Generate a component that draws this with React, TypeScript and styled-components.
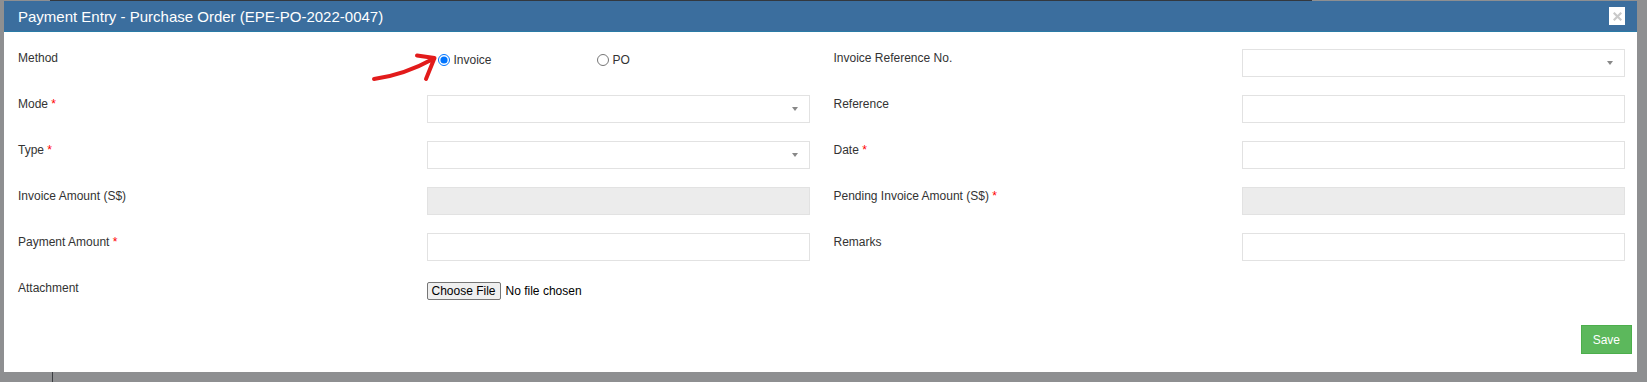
import React from "react";
import styled, { createGlobalStyle } from "styled-components";

const GlobalStyle = createGlobalStyle`
  html, body {
    margin: 0;
    padding: 0;
    background: #8e8f91;
    font-family: "Liberation Sans", Arial, sans-serif;
  }
`;

const Page = styled.div`
  width: 1647px;
  height: 382px;
  overflow: hidden;
`;

const TopStrip = styled.div`
  height: 1px;
  display: flex;
`;

const TopBar = styled.div`
  margin-left: 50px;
  width: 1262px;
  background: #33383e;
`;

const BottomStrip = styled.div`
  height: 10px;
  display: flex;
`;

const BottomLine = styled.div`
  margin-left: 52px;
  width: 1px;
  background: #3a3d41;
`;

const Modal = styled.div`
  margin-left: 4px;
  width: 1633px;
  background: #fff;
`;

const Header = styled.div`
  height: 30px;
  display: flex;
  align-items: center;
  justify-content: space-between;
  padding: 0 12px 0 14px;
  background: #3b6e9e;
  border-bottom: 1px solid #2b7ba6;
`;

const Title = styled.h4`
  margin: 0;
  font-size: 15px;
  font-weight: 400;
  line-height: 17px;
  color: #fff;
`;

const CloseButton = styled.button`
  width: 16px;
  height: 18px;
  padding: 0;
  border: none;
  background: #fff;
  display: flex;
  align-items: center;
  justify-content: center;
`;

const Body = styled.div`
  position: relative;
  padding: 17px 12px 0 14px;
`;

const Annotation = styled.svg`
  position: absolute;
  left: 361px;
  top: 18px;
  overflow: visible;
`;

const Row = styled.div`
  display: grid;
  grid-template-columns: 1fr 1fr;
  column-gap: 24px;
  min-height: 28px;
  margin-bottom: 18px;
`;

const Field = styled.div`
  display: grid;
  grid-template-columns: 1fr 383px;
  align-items: start;
`;

const Label = styled.label`
  padding-top: 1px;
  font-size: 12px;
  line-height: 17px;
  color: #333;
`;

const Required = styled.span`
  color: #f00;
`;

const TextInput = styled.input<{ $readonly?: boolean }>`
  box-sizing: border-box;
  width: 100%;
  height: 28px;
  margin: 0;
  border: 1px solid #e2e2e2;
  background: ${(p) => (p.$readonly ? "#ececec" : "#fff")};
  font: 12px "Liberation Sans", Arial, sans-serif;
  outline: none;
`;

const SelectBox = styled.div`
  box-sizing: border-box;
  height: 28px;
  border: 1px solid #e2e2e2;
  background: #fff;
  display: flex;
  align-items: center;
  justify-content: flex-end;
  padding-right: 11px;
`;

const Caret = styled.span`
  width: 0;
  height: 0;
  border-style: solid;
  border-width: 4px 3px 0 3px;
  border-color: #888 transparent transparent transparent;
`;

const RadioGroup = styled.div`
  display: flex;
  padding: 2px 0 0 6px;
`;

const RadioOption = styled.label<{ $width?: number }>`
  width: ${(p) => (p.$width ? `${p.$width}px` : "auto")};
  font-size: 12px;
  line-height: 17px;
  color: #333;

  input {
    margin: 3px 4px 0 5px;
    vertical-align: -2px;
    width: 12px;
    height: 12px;
  }
`;

const FileInput = styled.input`
  margin-top: 3px;
  font: 12px "Liberation Sans", Arial, sans-serif;
  color: #000;

  &::file-selector-button {
    height: 18px;
    padding: 0 4px;
    margin-right: 5px;
    border: 1px solid #767676;
    border-radius: 2px;
    background: #efefef;
    font: 12px "Liberation Sans", Arial, sans-serif;
    color: #000;
  }
`;

const Footer = styled.div`
  display: flex;
  justify-content: flex-end;
  padding: 0 5px 18px 0;
`;

const SaveButton = styled.button`
  height: 29px;
  padding: 0 11px;
  border: 1px solid #4cae4c;
  background: #5cb85c;
  color: #fff;
  font: 12px "Liberation Sans", Arial, sans-serif;
`;

const Select: React.FC = () => (
  <SelectBox>
    <Caret />
  </SelectBox>
);

const FormField: React.FC<{ label: string; required?: boolean; children: React.ReactNode }> = ({
  label,
  required,
  children,
}) => (
  <Field>
    <Label>
      {label}
      {required && <Required> *</Required>}
    </Label>
    {children}
  </Field>
);

export default function App() {
  return (
    <Page>
      <GlobalStyle />
      <TopStrip>
        <TopBar />
      </TopStrip>
      <Modal>
        <Header>
          <Title>Payment Entry - Purchase Order (EPE-PO-2022-0047)</Title>
          <CloseButton aria-label="Close">
            <svg width="9" height="9" viewBox="0 0 9 9">
              <path d="M1.5 1.5 L7.5 7.5 M7.5 1.5 L1.5 7.5" stroke="#c9c9c9" strokeWidth="2.2" strokeLinecap="square" />
            </svg>
          </CloseButton>
        </Header>
        <Body>
          <Annotation width="80" height="35" viewBox="365 50 80 35">
            <path
              d="M374 79 Q 404 75 433 59 M417 55.5 L434.5 58 L426 79"
              fill="none"
              stroke="#e21b1b"
              strokeWidth="4"
              strokeLinecap="round"
              strokeLinejoin="round"
            />
          </Annotation>
          <Row>
            <FormField label="Method">
              <RadioGroup>
                <RadioOption $width={159}>
                  <input type="radio" name="method" defaultChecked />
                  Invoice
                </RadioOption>
                <RadioOption>
                  <input type="radio" name="method" />
                  PO
                </RadioOption>
              </RadioGroup>
            </FormField>
            <FormField label="Invoice Reference No.">
              <Select />
            </FormField>
          </Row>
          <Row>
            <FormField label="Mode" required>
              <Select />
            </FormField>
            <FormField label="Reference">
              <TextInput />
            </FormField>
          </Row>
          <Row>
            <FormField label="Type" required>
              <Select />
            </FormField>
            <FormField label="Date" required>
              <TextInput />
            </FormField>
          </Row>
          <Row>
            <FormField label="Invoice Amount (S$)">
              <TextInput $readonly readOnly />
            </FormField>
            <FormField label="Pending Invoice Amount (S$)" required>
              <TextInput $readonly readOnly />
            </FormField>
          </Row>
          <Row>
            <FormField label="Payment Amount" required>
              <TextInput />
            </FormField>
            <FormField label="Remarks">
              <TextInput />
            </FormField>
          </Row>
          <Row>
            <FormField label="Attachment">
              <div>
                <FileInput type="file" />
              </div>
            </FormField>
            <div />
          </Row>
        </Body>
        <Footer>
          <SaveButton>Save</SaveButton>
        </Footer>
      </Modal>
      <BottomStrip>
        <BottomLine />
      </BottomStrip>
    </Page>
  );
}
